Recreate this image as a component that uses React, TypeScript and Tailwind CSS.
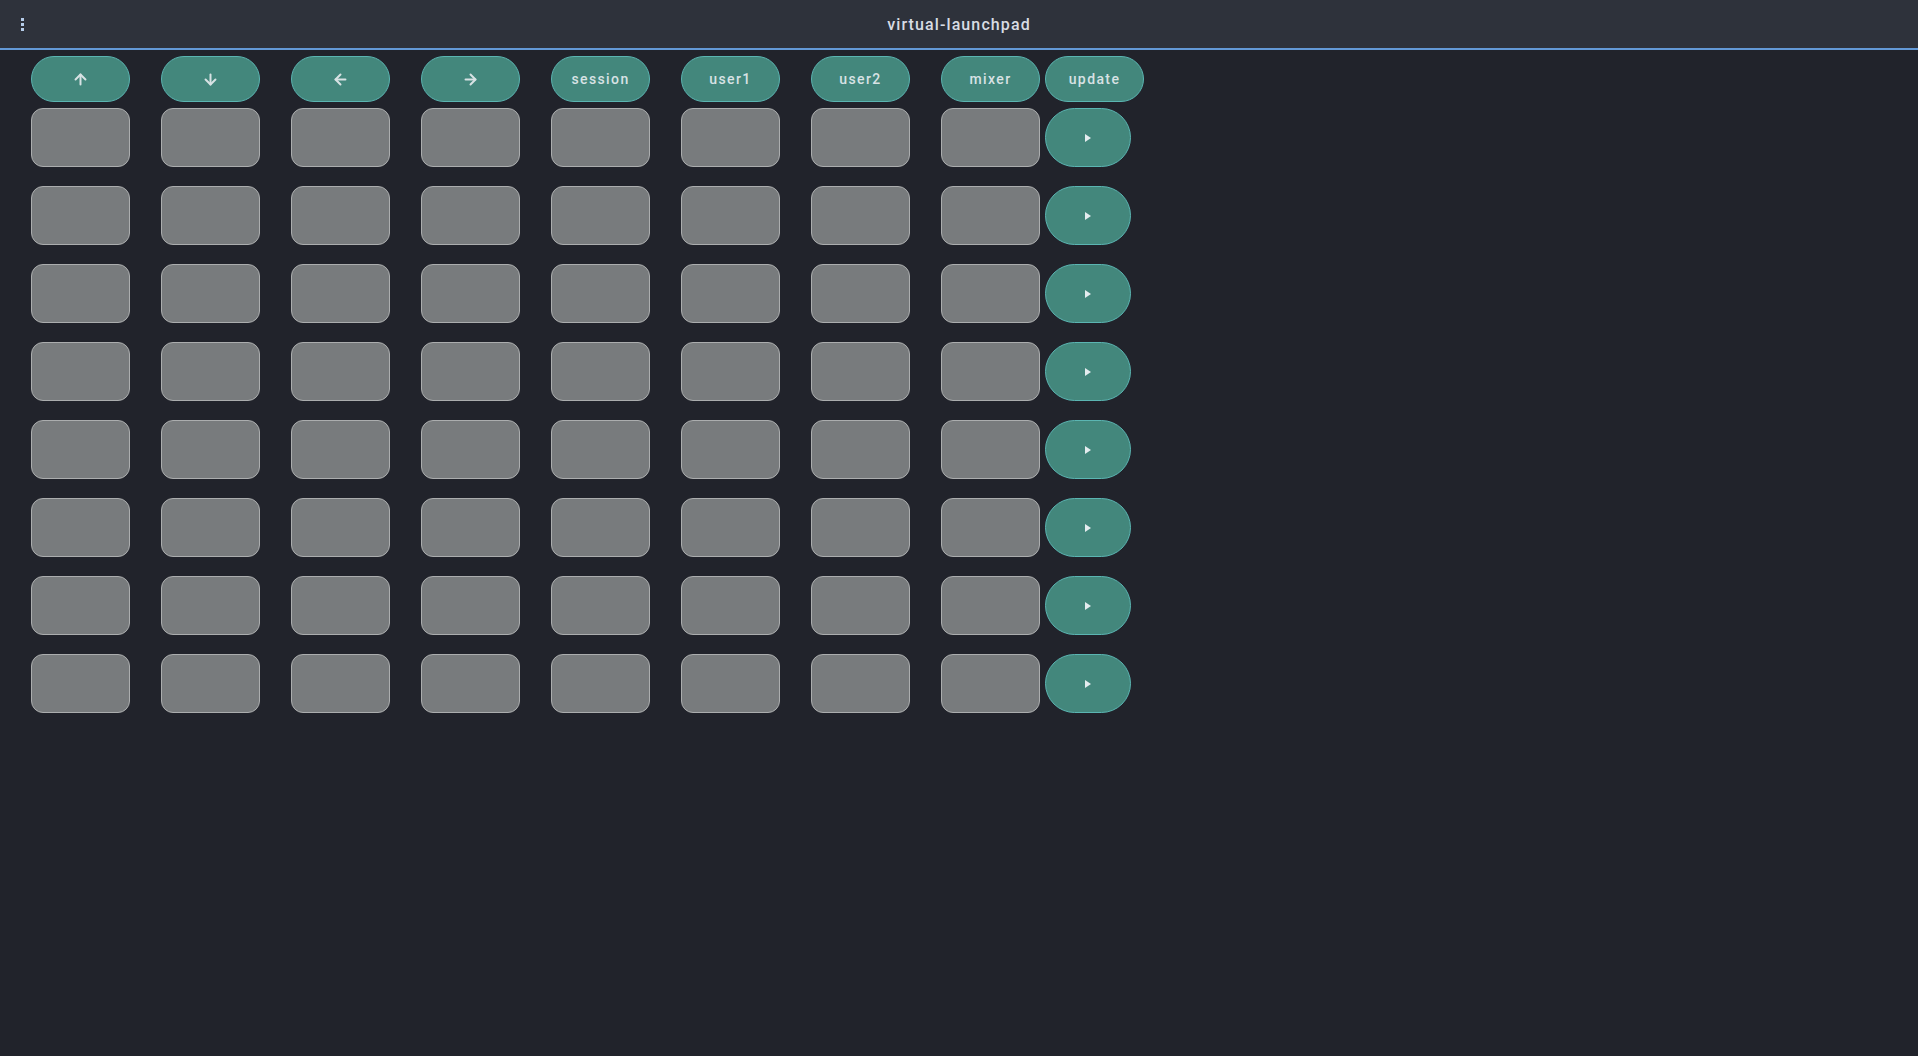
import { ArrowUp, ArrowDown, ArrowLeft, ArrowRight } from "lucide-react";

const topButtons = ["up", "down", "left", "right", "session", "user1", "user2", "mixer"];

function TopLabel({ name }: { name: string }) {
  if (name === "up") return <ArrowUp size={17} strokeWidth={2.8} />;
  if (name === "down") return <ArrowDown size={17} strokeWidth={2.8} />;
  if (name === "left") return <ArrowLeft size={17} strokeWidth={2.8} />;
  if (name === "right") return <ArrowRight size={17} strokeWidth={2.8} />;
  return <span>{name}</span>;
}

function PlayIcon() {
  return (
    <svg width="8" height="10" viewBox="0 0 8 10">
      <polygon points="1,1 7,5 1,9" fill="#e4ecef" />
    </svg>
  );
}

export default function App() {
  const rows = [0, 1, 2, 3, 4, 5, 6, 7];
  const cols = [0, 1, 2, 3, 4, 5, 6, 7];

  return (
    <div className="min-h-screen bg-[#21232b] font-['Roboto',sans-serif] text-[#d6dde2]">
      <header className="h-[50px] bg-[#2e323b] border-b-2 border-[#6399d6] flex items-center relative">
        <button className="w-[44px] h-full flex items-center justify-center">
          <span className="flex flex-col gap-[2px]">
            <span className="w-[3px] h-[3px] bg-[#b6cdea]" />
            <span className="w-[3px] h-[3px] bg-[#b6cdea]" />
            <span className="w-[3px] h-[3px] bg-[#b6cdea]" />
          </span>
        </button>
        <h1 className="absolute left-1/2 -translate-x-1/2 pt-[2px] text-[16px] font-medium tracking-[1.1px] text-[#d8dde4]">
          virtual-launchpad
        </h1>
      </header>

      <main className="pl-[31px] pt-[6px]">
        <div className="flex items-center">
          <div className="flex gap-[31px]">
            {topButtons.map((b) => (
              <button
                key={b}
                className="w-[99px] h-[46px] rounded-full bg-[#43877c] border border-[#5bb5b2] flex items-center justify-center text-[14px] font-medium tracking-[1.4px] text-[#d8e2e4]"
              >
                <TopLabel name={b} />
              </button>
            ))}
          </div>
          <button className="ml-[5px] w-[99px] h-[46px] rounded-full bg-[#43877c] border border-[#5bb5b2] flex items-center justify-center text-[14px] font-medium tracking-[1.4px] text-[#d8e2e4]">
            update
          </button>
        </div>

        <div className="mt-[6px] flex flex-col gap-[19px]">
          {rows.map((r) => (
            <div key={r} className="flex items-center">
              <div className="flex gap-[31px]">
                {cols.map((c) => (
                  <button
                    key={c}
                    className="w-[99px] h-[59px] rounded-[12px] bg-[#787b7d] border border-[#abadae]"
                  />
                ))}
              </div>
              <button className="ml-[5px] w-[86px] h-[59px] rounded-full bg-[#43877c] border border-[#5bb5b2] flex items-center justify-center">
                <PlayIcon />
              </button>
            </div>
          ))}
        </div>
      </main>
    </div>
  );
}
